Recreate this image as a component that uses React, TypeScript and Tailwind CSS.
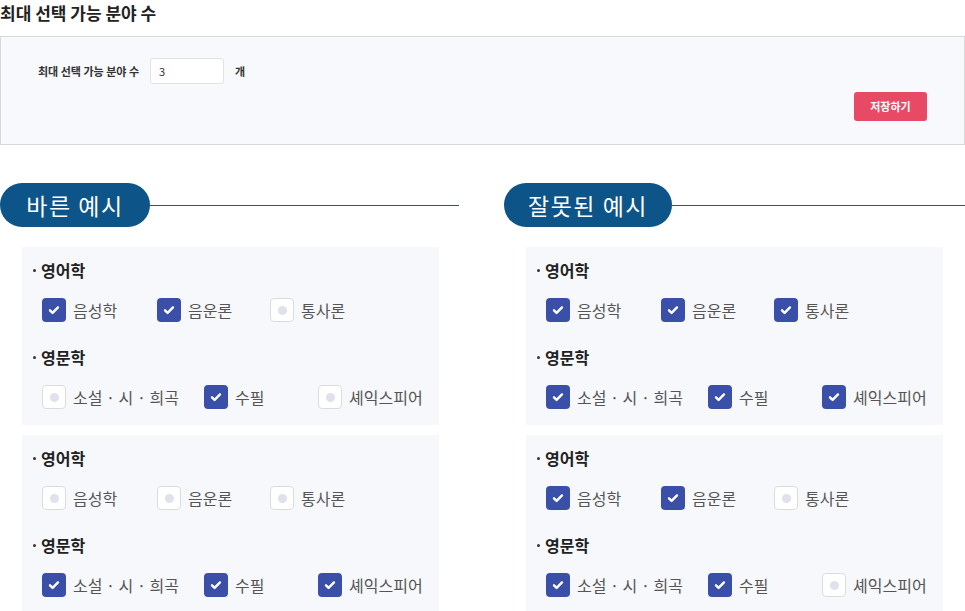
import React from 'react';

type Item = { label: string; checked: boolean; w?: string };
type Group = { title: string; items: Item[] };

const font = { fontFamily: '"Noto Sans CJK KR", "Noto Sans", sans-serif' };

const Checkbox: React.FC<{ checked: boolean }> = ({ checked }) =>
  checked ? (
    <span className="flex h-[24px] w-[24px] shrink-0 items-center justify-center rounded-[4px] bg-[#3a50a8]">
      <svg width="14" height="14" viewBox="0 0 14 14" fill="none">
        <path d="M3 7.3l2.6 2.6L11 4.4" stroke="#fff" strokeWidth="2.4" strokeLinecap="round" strokeLinejoin="round" />
      </svg>
    </span>
  ) : (
    <span className="flex h-[24px] w-[24px] shrink-0 items-center justify-center rounded-[4px] border border-[#dcdcdc] bg-white">
      <span className="h-[9px] w-[9px] rounded-full bg-[#dfe2ea]" />
    </span>
  );

const Card: React.FC<{ groups: Group[] }> = ({ groups }) => (
  <div className="ml-[22px] w-[417px] bg-[#f7f8fc] pl-[11px] pt-[13px] pb-[16px]">
    {groups.map((g, gi) => (
      <div key={gi} className={gi > 0 ? 'mt-[25px]' : ''}>
        <div className="flex items-center gap-[5px] text-[16px] font-bold leading-[20px] text-[#222]">
          <span className="h-[3px] w-[3px] rounded-full bg-[#333]" />
          {g.title}
        </div>
        <div className="mt-[18px] flex items-center pl-[9px]">
          {g.items.map((it, i) => (
            <div key={i} className={`flex items-center gap-[7px] ${it.w ?? ''}`}>
              <Checkbox checked={it.checked} />
              <span className="text-[16px] leading-[24px] text-[#555]">{it.label}</span>
            </div>
          ))}
        </div>
      </div>
    ))}
  </div>
);

const mk = (a: boolean[], b: boolean[]): Group[] => [
  {
    title: '영어학',
    items: [
      { label: '음성학', checked: a[0], w: 'w-[115px]' },
      { label: '음운론', checked: a[1], w: 'w-[113px]' },
      { label: '통사론', checked: a[2] },
    ],
  },
  {
    title: '영문학',
    items: [
      { label: '소설 · 시 · 희곡', checked: b[0], w: 'w-[162px]' },
      { label: '수필', checked: b[1], w: 'w-[114px]' },
      { label: '셰익스피어', checked: b[2] },
    ],
  },
];

const Section: React.FC<{ title: string; pill: string; cards: Group[][] }> = ({ title, pill, cards }) => (
  <div>
    <div className="flex items-center">
      <div className={`flex h-[44px] ${pill} shrink-0 items-center justify-center rounded-full bg-[#0d5489] text-[23px] tracking-[1.5px] text-white`}>
        {title}
      </div>
      <div className="h-px flex-1 bg-[#3d4b7c]" />
    </div>
    <div className="mt-[20px] flex flex-col gap-[10px]">
      {cards.map((c, i) => (
        <Card key={i} groups={c} />
      ))}
    </div>
  </div>
);

export default function App() {
  return (
    <div className="h-[611px] w-[965px] overflow-hidden bg-white" style={font}>
      <div className="pt-[1px] text-[17px] font-bold leading-[23px] text-[#222]">최대 선택 가능 분야 수</div>
      <div className="mt-[12px] h-[109px] border border-[#d9d9d9] bg-[#f8f9fc] pl-[37px] pt-[21px] pr-[37px]">
        <div className="flex items-center">
          <span className="text-[11px] font-bold text-[#333]">최대 선택 가능 분야 수</span>
          <div className="ml-[11px] flex h-[26px] w-[74px] items-center rounded-[3px] border border-[#e2e2e2] bg-white pl-[8px] text-[11px] text-[#333]">
            3
          </div>
          <span className="ml-[11px] text-[11px] font-bold text-[#333]">개</span>
        </div>
        <div className="mt-[8px] flex justify-end">
          <button className="h-[29px] w-[73px] rounded-[3px] bg-[#e84a66] text-[11px] font-bold text-white">
            저장하기
          </button>
        </div>
      </div>
      <div className="mt-[38px] grid grid-cols-[459px_461px] gap-x-[45px]">
        <Section
          title="바른 예시"
          pill="w-[150px]"
          cards={[mk([true, true, false], [false, true, false]), mk([false, false, false], [true, true, true])]}
        />
        <Section
          title="잘못된 예시"
          pill="w-[168px]"
          cards={[mk([true, true, true], [true, true, true]), mk([true, true, false], [true, true, false])]}
        />
      </div>
    </div>
  );
}
